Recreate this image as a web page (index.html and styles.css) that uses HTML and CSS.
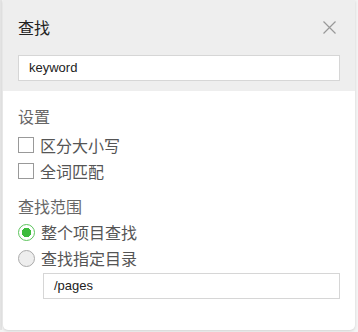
FILE: index.html
```html
<!DOCTYPE html>
<html lang="zh-CN">
<head>
    <meta charset="UTF-8">
    <title>查找</title>
    <link rel="stylesheet" href="styles.css">
</head>
<body>
    <div class="backdrop">
        <div class="dialog">
            <div class="dialog-head">
                <div class="title-row">
                    <span class="title">查找</span>
                    <span class="close">
                        <svg width="13" height="13" viewBox="0 0 13 13">
                            <path d="M0.5 0.5 L12.5 12.5 M12.5 0.5 L0.5 12.5" stroke="#999" stroke-width="1.2" fill="none"/>
                        </svg>
                    </span>
                </div>
                <div class="field">keyword</div>
            </div>

            <div class="dialog-body">
                <div class="section-title">设置</div>
                <div class="option">
                    <span class="checkbox"></span>
                    <span>区分大小写</span>
                </div>
                <div class="option">
                    <span class="checkbox"></span>
                    <span>全词匹配</span>
                </div>

                <div class="section-title spaced">查找范围</div>
                <div class="option">
                    <span class="radio checked"></span>
                    <span>整个项目查找</span>
                </div>
                <div class="option">
                    <span class="radio"></span>
                    <span>查找指定目录</span>
                </div>
                <div class="field dir">/pages</div>
            </div>
        </div>
    </div>
</body>
</html>
```

FILE: styles.css
```css
* {
    margin: 0;
    padding: 0;
    box-sizing: border-box;
}

body {
    font-family: 'Liberation Sans', Arial, 'Noto Sans CJK SC', sans-serif;
    background: #f4f4f4;
    height: 332px;
    overflow: hidden;
}

.backdrop {
    padding-left: 3px;
    border-left: 2px solid #e4e4e4;
}

.dialog {
    width: 352px;
    height: 330px;
    margin-left: -2px;
    background: #fff;
    border-radius: 0 0 5px 5px;
    box-shadow: 0 1px 3px rgba(0, 0, 0, 0.15);
    overflow: hidden;
}

.dialog-head {
    background: #eee;
    padding: 17px 15px 10px;
}

.title-row {
    display: flex;
    justify-content: space-between;
    align-items: center;
    height: 20px;
    margin-bottom: 18px;
}

.title {
    font-size: 16px;
    color: #222;
}

.close {
    display: flex;
    margin-right: 4px;
}

.field {
    height: 26px;
    line-height: 24px;
    background: #fff;
    border: 1px solid #d6d6d6;
    padding-left: 10px;
    font-size: 13px;
    color: #222;
}

.dialog-body {
    padding: 16px 15px 0;
}

.section-title {
    font-size: 16px;
    line-height: 22px;
    color: #666;
    margin-bottom: 3px;
}

.section-title.spaced {
    margin-top: 13px;
    margin-bottom: 0;
}

.option {
    display: flex;
    align-items: center;
    height: 26px;
    gap: 6px;
    font-size: 16px;
    color: #555;
}

.checkbox {
    width: 16px;
    height: 16px;
    border: 1px solid #999;
    background: #fff;
}

.radio {
    width: 17px;
    height: 17px;
    border-radius: 50%;
    border: 1px solid #aaa;
    background: #eee;
}

.radio.checked {
    border-color: #5cc45c;
    background: radial-gradient(circle, #3cbb3c 0 4.5px, #fff 5px);
}

.field.dir {
    margin: 2px 0 0 25px;
}
```
